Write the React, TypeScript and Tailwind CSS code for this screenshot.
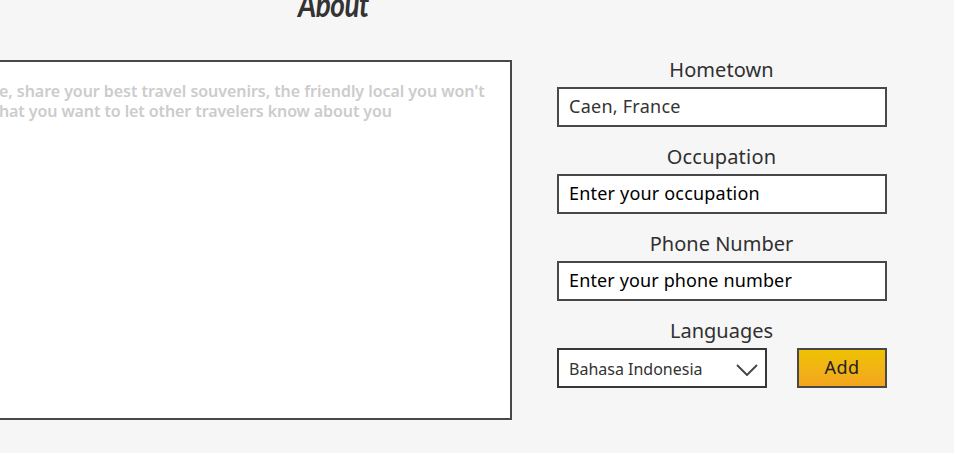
type FieldProps = { label: string; value: string; labelClass: string; valueClass: string };

function Field({ label, value, labelClass, valueClass }: FieldProps) {
  return (
    <div className="flex h-[87px] flex-col">
      <label className={`flex h-[33px] items-center justify-center whitespace-nowrap pb-0.5 pr-px text-[20px] text-[#303030] ${labelClass}`}>{label}</label>
      <div className={`flex h-10 items-center whitespace-nowrap border-2 border-[#484848] bg-white pb-0.5 pl-[10px] text-[18px] ${valueClass}`}>
        <span>{value}</span>
      </div>
    </div>
  );
}

export default function App() {
  return (
    <main className="h-[453px] w-[954px] overflow-hidden bg-[#f6f6f6] font-['Noto_Sans',sans-serif]">
      <div className="flex h-[60px] items-start pl-[298px]">
        <h1 className="-mt-[17px] origin-[0_34px] scale-y-125 whitespace-nowrap font-[Lato] text-[28px] font-bold italic leading-[46px] tracking-[-0.5px] text-[#333]">About</h1>
      </div>
      <div className="flex">
        <section className="h-[360px] w-[512px] overflow-hidden border-y-2 border-r-2 border-[#484848] bg-white pt-[19px] text-[16px] font-semibold leading-5 text-[#ccc]">
          <p className="-ml-px whitespace-nowrap tracking-[-0.05px]">e, share your best travel souvenirs, the friendly local you won't</p>
          <p className="-ml-px whitespace-nowrap tracking-[-0.1px]">hat you want to let other travelers know about you</p>
        </section>
        <form className="-mt-[6px] ml-[45px] w-[330px]">
          <Field label="Hometown" value="Caen, France" labelClass="tracking-[0.05px]" valueClass="text-[#333] tracking-[0.25px]" />
          <Field label="Occupation" value="Enter your occupation" labelClass="tracking-[0.2px]" valueClass="text-black tracking-[0.19px]" />
          <Field label="Phone Number" value="Enter your phone number" labelClass="tracking-[0px]" valueClass="text-black tracking-[0.13px]" />
          <div className="flex h-[33px] items-center justify-center pb-0.5 pr-px text-[20px] text-[#303030]">Languages</div>
          <div className="flex gap-[30px]">
            <div className="flex h-10 w-[210px] items-center justify-between border-2 border-[#383838] bg-white pl-[10px] pr-[7px] text-[16px] text-[#333]">
              <span className="whitespace-nowrap pt-0.5">Bahasa Indonesia</span>
              <svg className="mt-1 h-3 w-[22px]" viewBox="0 0 22 12" fill="none" stroke="#444" strokeWidth="1.9">
                <path d="M1 1L11 11L21 1" />
              </svg>
            </div>
            <button type="button" className="flex h-10 w-[90px] items-center justify-center border-2 border-[#484848] bg-linear-to-b from-[#edc200] to-[#f4a51e] pb-0.5 text-[18px] tracking-[0.4px] text-[#222]"><span>Add</span></button>
          </div>
        </form>
      </div>
    </main>
  );
}
